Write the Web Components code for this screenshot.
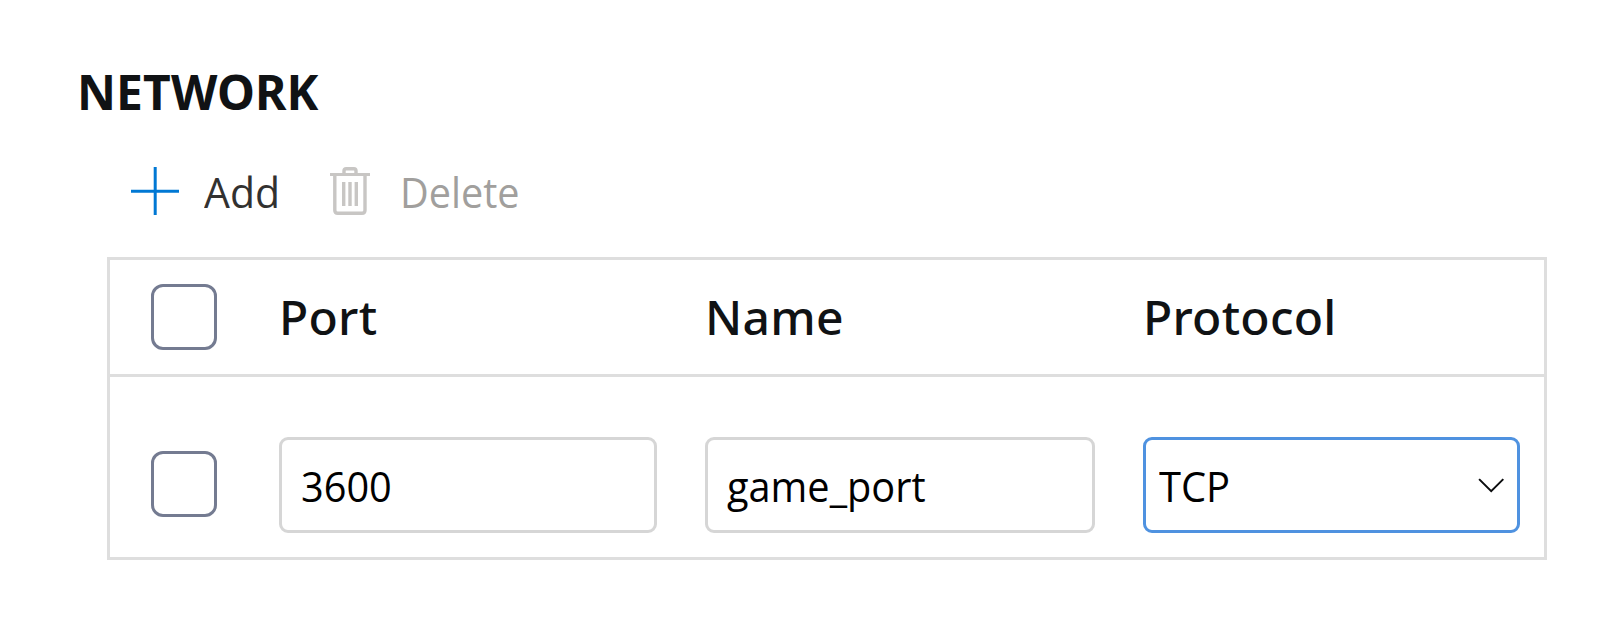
<!DOCTYPE html>
<html lang="en">
<head>
<meta charset="utf-8">
<title>Network</title>
<style>
body { margin: 0; background: #fff; font-family: "Noto Sans", "Open Sans", sans-serif; }
</style>
</head>
<body>
<network-panel></network-panel>
<script>
const define = (name, html) => customElements.define(name, class extends HTMLElement {
  constructor() {
    super();
    this.attachShadow({ mode: 'open' }).innerHTML = html;
  }
});

define('check-box', `<style>
:host { display: block; box-sizing: border-box; width: 66px; height: 66px; border: 3px solid #747b91; border-radius: 12px; background: #fff; }
</style>`);

define('tool-button', `<style>
:host { display: flex; align-items: center; height: 56px; font: 400 42px/56px "Open Sans", sans-serif; color: #323130; white-space: nowrap; }
:host([disabled]) { color: #a19f9d; }
::slotted(svg) { display: block; flex: none; }
.label { display: block; transform: scaleX(var(--squeeze, 1)); transform-origin: 0 50%; }
</style><slot name="icon"></slot><span class="label"><slot></slot></span>`);

define('text-field', `<style>
:host { display: block; box-sizing: border-box; height: 96px; margin-top: 2px; border: 3px solid #d6d6d6; border-radius: 9px; background: #fff;
  padding-left: 18.6px; font: 400 42px/92px "Open Sans", sans-serif; color: #000; white-space: nowrap; }
.value { display: block; transform: scaleX(.945); transform-origin: 0 50%; }
</style><span class="value"><slot></slot></span>`);

define('select-field', `<style>
:host { display: flex; justify-content: space-between; box-sizing: border-box; height: 96px; margin-top: 2px; border: 3px solid #4f92e0; border-radius: 9px; background: #fff;
  padding: 0 12px 0 13px; font: 400 42px/92px "Open Sans", sans-serif; color: #000; white-space: nowrap; }
.value { display: block; transform: scaleX(.95); transform-origin: 0 50%; }
svg { display: block; margin-top: 37px; }
</style><span class="value"><slot></slot></span>
<svg width="28" height="16" viewBox="0 0 28 16" fill="none" stroke="#0b0c0e" stroke-width="2"><path d="M2.1 2.1 L14.2 14.2 L26.3 2.1"/></svg>`);

define('table-row', `<style>
:host { display: grid; grid-template-columns: 128px 426px 438px 377px; padding-left: 41px; align-items: center; box-sizing: border-box; }
:host([header]) { height: 117px; border-bottom: 3px solid #dedede; font: 500 48px/114px "Noto Sans", sans-serif; letter-spacing: .25px; color: #101214; }
:host(:not([header])) { height: 180px; padding-top: 34px; }
</style><slot></slot>`);

define('port-table', `<style>
:host { display: block; box-sizing: border-box; width: 1440px; height: 303px; border: 3px solid #dedede; }
text-field.port { width: 378px; }
text-field.name { width: 390px; }
select-field { width: 377px; }
</style>
<table-row header>
  <check-box></check-box>
  <span>Port</span><span>Name</span><span>Protocol</span>
</table-row>
<table-row>
  <check-box></check-box>
  <text-field class="port">3600</text-field>
  <text-field class="name">game_port</text-field>
  <select-field>TCP</select-field>
</table-row>`);

define('network-panel', `<style>
:host { display: block; box-sizing: border-box; width: 1622px; height: 631px; padding: 60px 0 0 77px; }
h2 { margin: 0; font: 700 48px/64px "Noto Sans", sans-serif; letter-spacing: .1px; color: #101214; }
.bar { display: flex; margin: 40px 0 37px 54px; }
tool-button svg { display: block; margin-top: -2px; }
tool-button { width: 199px; --squeeze: .975; }
tool-button[disabled] { width: auto; --squeeze: .943; }
.plus { margin-right: 24.5px; }
.trash { margin-right: 30px; }
port-table { margin-left: 30px; }
</style>
<h2>NETWORK</h2>
<div class="bar">
  <tool-button><svg class="plus" slot="icon" width="48" height="48" viewBox="0 0 48 48" fill="none" stroke="#0078d4"><path stroke-width="3" d="M24.2 0V48M0 24.2H48"/></svg>Add</tool-button>
  <tool-button disabled><svg class="trash" slot="icon" width="40" height="48" viewBox="0 0 40 48" fill="none" stroke="#c8c6c4" stroke-width="3.4"><path stroke-width="3" d="M0 7.5H40"/><path d="M14 7.5V3.8Q14 1.7 16.1 1.7H23.9Q26 1.7 26 3.8V7.5M4.8 7.5V43.3Q4.8 46.3 7.8 46.3H32Q35 46.3 35 43.3V7.5M13.7 15V39M20 15V39M26.3 15V39"/></svg>Delete</tool-button>
</div>
<port-table></port-table>`);
</script>
</body>
</html>
